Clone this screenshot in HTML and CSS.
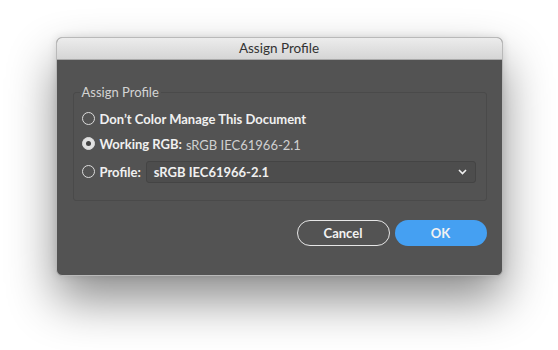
FILE: index.html
```html
<!DOCTYPE html>
<html lang="en">
<head>
    <meta charset="UTF-8">
    <meta name="viewport" content="width=device-width, initial-scale=1.0">
    <title>Assign Profile</title>
    <link rel="stylesheet" href="styles.css">
</head>
<body>
<div class="dialog">
    <div class="titlebar">Assign Profile</div>

    <div class="dialog-body">
        <fieldset class="group">
            <legend>Assign Profile</legend>

            <label class="option">
                <span class="radio"></span>
                <span class="option-label">Don’t Color Manage This Document</span>
            </label>

            <label class="option">
                <span class="radio checked"></span>
                <span class="option-label">Working RGB:</span>
                <span class="option-value">sRGB IEC61966-2.1</span>
            </label>

            <label class="option option-profile">
                <span class="radio"></span>
                <span class="option-label">Profile:</span>
                <span class="select">
                    <span class="select-text">sRGB IEC61966-2.1</span>
                    <svg class="chevron" width="9" height="6" viewBox="0 0 9 6">
                        <path d="M1 1 L4.5 4.5 L8 1" fill="none" stroke="#f0f0f0" stroke-width="1.6"/>
                    </svg>
                </span>
            </label>
        </fieldset>

        <div class="buttons">
            <button class="btn btn-cancel">Cancel</button>
            <button class="btn btn-ok">OK</button>
        </div>
    </div>
</div>
</body>
</html>
```

FILE: styles.css
```css
/* General Reset */
html {
    height: 100%;
}

body {
    margin: 0;
    padding: 37px 0 0;
    min-height: 100%;
    box-sizing: border-box;
    background: #ffffff;
    font-family: Lato, "Liberation Sans", Arial, sans-serif;
    display: flex;
    justify-content: center;
    align-items: flex-start;
}

/* Window */
.dialog {
    width: 447px;
    height: 239px;
    box-sizing: border-box;
    background: #535353;
    border: 1px solid #b9b9b9;
    border-radius: 6px;
    overflow: hidden;
    box-shadow: 0 24px 48px rgba(0, 0, 0, 0.45), 0 0 8px rgba(0, 0, 0, 0.12);
    display: flex;
    flex-direction: column;
}

.titlebar {
    height: 21px;
    line-height: 21px;
    text-align: center;
    font-size: 13.5px;
    color: #333;
    background: linear-gradient(#ececec, #d5d5d5);
    border-bottom: 1px solid #a9a9a9;
}

.dialog-body {
    flex: 1;
    padding: 24px 15px 0 15px;
}

/* Group box */
.group {
    margin: 0 0 0 1px;
    padding: 6px 10px 14px 8px;
    border: 1px solid #4a4a4a;
    border-radius: 3px;
    display: flex;
    flex-direction: column;
}

.group legend {
    padding: 0 2px;
    margin-left: -2px;
    font-size: 13px;
    color: #d4d4d4;
}

.option {
    display: flex;
    align-items: center;
    height: 25px;
    font-size: 13px;
    color: #f0f0f0;
}

.option-profile {
    height: 29px;
    margin-top: 1px;
}

.radio {
    width: 11px;
    height: 11px;
    border: 1px solid #dcdcdc;
    border-radius: 50%;
    margin-right: 5px;
    flex: 0 0 auto;
    position: relative;
}

.radio.checked {
    background: #e2e2e2;
}

.radio.checked::after {
    content: "";
    position: absolute;
    left: 3px;
    top: 3px;
    width: 5px;
    height: 5px;
    border-radius: 50%;
    background: #444;
}

.option-label {
    font-weight: bold;
}

.option-value {
    margin-left: 4px;
    color: #d0d0d0;
    font-size: 13px;
    padding-top: 2px;
}

/* Dropdown */
.select {
    flex: 1;
    margin-left: 5px;
    height: 20px;
    display: flex;
    align-items: center;
    justify-content: space-between;
    padding: 0 8px 0 7px;
    background: #4d4d4d;
    border: 1px solid #444;
    border-radius: 3px;
    font-weight: bold;
}

.chevron {
    display: block;
}

/* Buttons */
.buttons {
    display: flex;
    justify-content: flex-end;
    gap: 5px;
    margin-top: 19px;
}

.btn {
    width: 93px;
    height: 26px;
    border-radius: 13px;
    font-family: Lato, "Liberation Sans", Arial, sans-serif;
    font-size: 13px;
    font-weight: bold;
    color: #f2f2f2;
    cursor: pointer;
}

.btn-cancel {
    background: transparent;
    border: 1.5px solid #e6e6e6;
}

.btn-ok {
    width: 92px;
    background: #45a0f2;
    border: none;
}
```
